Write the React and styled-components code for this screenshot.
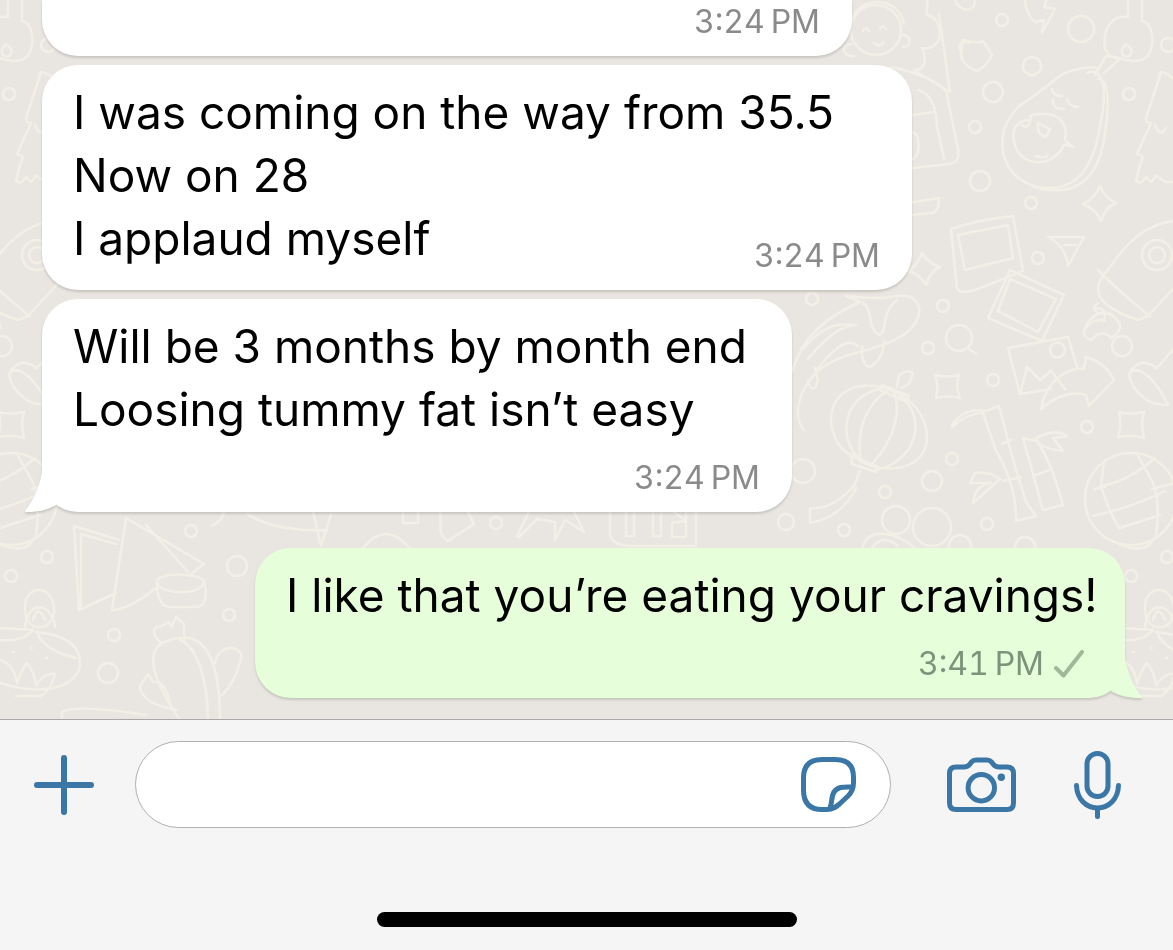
import React, { useState } from "react";
import styled, { createGlobalStyle } from "styled-components";

const DOTS = [
  [1002, 20, 6], [1081, 29, 13], [1032, 66, 9], [993, 92, 10], [1129, 94, 6],
  [975, 127, 6], [980, 181, 10], [1031, 203, 6], [1038, 258, 6], [812, 299, 6],
  [943, 306, 6], [928, 348, 6], [993, 380, 6], [1122, 346, 10], [1087, 427, 6],
  [952, 459, 6], [932, 481, 10], [885, 492, 6], [896, 520, 14], [932, 527, 19],
  [987, 524, 6], [844, 530, 6], [786, 522, 8], [1025, 547, 10], [960, 546, 11],
  [191, 531, 6], [47, 557, 6], [11, 576, 6], [237, 566, 10], [229, 615, 6],
  [114, 635, 6], [108, 673, 10], [496, 523, 6], [1168, 45, 7],
  [803, 471, 12],
];

const DOODLES = [
  // baby face and fox
  "M851 30a25 25 0 1 0 50 0a25 25 0 1 0-50 0M852 22c3-25 46-29 52 2M863 31q3-5 6 0M880 29q3-5 6 0M874 43q6 5 10-1M851 44c-10 1-10 12 3 12M902 35c10-1 10 12 1 12",
  "M927 0c2 8-4 14 3 16c9 3 12 17 8 25c-4 7-13 8-16 7c3 6 7 22-8 22l36 22l-11-78M892 67c22 5 42 12 54 24l12 58c2 10-2 14-9 15l-36 4M918 90c14 4 18 18 19 36l7 33M913 115l20-3M913 132c8 3 7 24 0 27",
  // bag and bolt
  "M963 40q12 4 20 1l9 14q-4 10-15 16q-14-5-16-15zM968 43c-10-6-10 8-6 9M955 0c4 12 20 14 20 0",
  "M1025 0c1 10 4 18 10 22l9-2l-2 13l13-24l-11-2l3-8",
  // avocado
  "M1095 75c12-13-20-7-34 0c-13 10-25 20-36 27c-32 20-31 72 9 84c50 12 62-33 66-61c10-44-1-58-13-52M1034 187c66 18 70-43 73-70c2-22 0-38-9-38M1096 73l10-17l15 2l-17 15M1052 89q1 7 10 7M1067 99q2 8 11 8M1053 100q-1 9 11 9M1022 125q8 6 9-10c32-6 35 12 35 20q-4 6 8 12q-12-4-11 0c-14 24-46 18-49-6q-4-18 14-21M1036 156q9 3 12-1M1038 123l12 6l-4 8q-10-3-8-14",
  "M1128 0v17c-20-3-25 17-23 31c4 12 16 10 21 12c14 3 24 0 26-16c2-14-4-22-10-23V0M1122 50a5 5 0 1 0 9-1q-5-9-9 1",
  // pine tree
  "M1161 72l-14 43q-3 8 4 8l-14 31q8 2 5 5l-6 21q4 6 10-3l5 5l5-6l10 6h14M1161 72q8 1 13 8M1155 125q5 13 11 3",
  // photo frames
  "M951 229q30-10 62-13l10 55l-48 19q-15 5-18-2zM958 235l50-10l5 33l-48 12zM1010 270l54 25l-22 46l-54-23zM1010 279l46 20l-18 33l-40-21z",
  "M1048 237h36l-16 29q-2-20-20-29M1064 245h12",
  // sparkles
  "M1100 186q5 12 16 17q-11 5-15 18q-5-12-18-17q12-6 17-18M922 253q6 10 18 14q-10 4-14 18q-5-10-18-14q10-6 14-18M935 375q12 3 24 0q-4 12 1 23q-12-3-24 0q3-12-1-23M1119 412q12 3 25 0q-4 12 0 26q-12-4-26-1q4-12 1-25M913 202l26-4q0 15-8 15l-20 2",
  // shark
  "M1200 220c-50-4-72 20-92 50q-30 30 30 50l10-4l52-56M1098 270q28 28 52 46M1142 255a15 15 0 1 0 30 0a15 15 0 1 0-30 0M1149 255a8 8 0 1 0 16 0a8 8 0 1 0-16 0",
  "M1115 318c-10-12-24-1-28 6q-8 12 4 16q12-12 20-2q16-10 4-20M1094 308q16 0 9 13M1098 303q-9 7 3 11M1085 329q9-12 20-8",
  // koi
  "M792 372c10-35 32-54 68-70l-14-6q35 4 51 0c16-3 24 8 22 18c-5 22-35 32-60 38q-32 8-46 24c-16 20-20 42-9 54M804 348c20-25 38-25 52-23q-20 0-48 34M863 303c10 5 4 26 16 32c9-2 1-22 18-35M862 346c-1 16 5 24 10 20q12-10 12-24M816 370c20-24 32-33 42-24M808 381q5 16 10 0l-3-13",
  // magnifier
  "M946 338a13 13 0 1 0 26 0a13 13 0 1 0-26 0M968 348l8 6",
  // picture and arrow
  "M1008 348l60-11l9 30M1008 348l12 46l31-5M1021 391l6-24l13 13l11-9l14 18M1050 350a7 7 0 1 0 15 0a7 7 0 1 0-15 0M1041 409c5-30 30-43 43-40l2-12q20 6 28 23l-25 26l-3-11q-22-6-45 14",
  // pen
  "M1130 372c12-8 28 12 38 33c-26 2-42-25-38-33q10-16 27-4l26-30",
  // lantern
  "M831 424c-3-60 92-45 96 12c1 42-60 37-71 20q-19-3-25-32M883 388c-48 9-43 62-18 74M888 390c-24 15-32 44-27 72M893 390c12 26-6 58-21 74M899 395c30 22 17 67-23 75M882 385l27 11l-2 6l-27-12zM897 387l2-12q8-6 14-2l-4 11l-8 4M851 456l25 10v6l-24-8zM860 471l-6 15q-22 24-44 22v15q32-6 46-35",
  // bamboo
  "M952 425q12-18 34-14l13-5l13 50l14 46l10 14l-20 5q0-38-20-70l-13-38q-15 0-31 14M1002 444l9-4M1003 481l18-4M1023 438l20 72l20-5q-12-44-26-64zM1036 475l13-5M1036 438q20-10 31-2l-14 2l10 13q-25-3-27-13M970 483l5-10q15-2 25 6l-27 24q2-18 18-20z",
  // ball
  "M1085 499a46 46 0 1 0 92 0a46 46 0 1 0-92 0M1093 516q40-9 72-25M1101 486q28-5 54-28M1104 461l-3 25q8 26 18 42M1136 452l16 29q9 20 4 54M1120 528l40-13M1105 487l-11 2M1152 489l22-6",
  // book and bowl
  "M74 526l45 14M81 534l35 10M74 526l5 84l37-17M81 534v75M126 518l-14 92q16 0 44-22M126 518l78 46l-14 11M146 525l42 47M157 582c-2-10 44-10 47 0c4 14 1 25-8 25h-28c-9-2-11-15-11-25M157 582q3 10 24 10q22 0 23-11",
  // candle bowl
  "M25 608c0-24 27-24 29 0c1 12-7 20-15 19c-9 0-14-7-14-19M33 620q5-17 12 0M0 628l33 2q-10 12-33 10M36 632q50 5 43 38c-10 20-40 25-79 13M37 632q6 18 39 26M0 660q14 4 17 23q4-12 10-20q8 10 9 23q8-14 19-12q-4 16-14 22h-25M31 648h1M13 652h1M46 658h1",
  // cactus
  "M180 720q-48-70-10-80c30-10 50 10 50 80M208 720c0-40-12-75-28-80M162 643c-8-4-12-18-2-16l8-5l4 4l4-9l8 7v18M215 663c4-22 30-16 26-4q-6 24-19 36M177 710q-36-6-37-24l8-12l5 8q12-1 17 20",
  "M62 720v-8q14-8 84 3M212 526q10-5 12-14M247 514q30 18 80 16M313 512l8 34l10-32",
  // between the bubbles
  "M362 549q24-30 48 0M440 513c2 12-4 20 8 28l26-17l-6-12M517 536l12-24M519 537l18-18l18 3v18l10-20l19 12l-10-20M610 512v23q4 12 24 11h62V512M626 512v24h8v-22M653 512v24h8v-22M674 512l12 9l-14 2v14h14v-24M403 512v11h15v-11",
  "M862 549c6-24 36-16 54 0M872 548q10-15 26-2M1120 545q28 9 33-6",
  // lotus
  "M1145 627c4-30 28-22 30 0",
];

export default function App() {
  const [draft, setDraft] = useState("");

  return (
    <>
      <GlobalStyle />
      <Page>
        <Chat>
          <Wallpaper />
          <Bubble $width={810} $cut>
            <Meta dateTime="15:24">3:24&#8239;PM</Meta>
          </Bubble>
          <Bubble $width={870}>
            <Message>
              I was coming on the way from 35.5
              <br />
              Now on 28
              <br />
              I applaud myself
            </Message>
            <Meta $inline dateTime="15:24">3:24&#8239;PM</Meta>
          </Bubble>
          <Bubble $width={750}>
            <Message>
              Will be 3 months by month end
              <br />
              Loosing tummy fat isn’t easy
            </Message>
            <Meta dateTime="15:24">3:24&#8239;PM</Meta>
            <Tail />
          </Bubble>
          <Bubble $width={870} $sent>
            <Message>I like that you’re eating your cravings!</Message>
            <Meta $sent dateTime="15:41">
              3:41&#8239;PM
              <Check />
            </Meta>
            <Tail $sent />
          </Bubble>
        </Chat>

        <Footer>
          <Composer>
            <IconButton type="button" aria-label="Attach">
              <svg width="60" height="60" viewBox="0 0 60 60">
                <path d="M30 3v54M3 30h54" strokeWidth="6" />
              </svg>
            </IconButton>
            <Field>
              <TextInput
                type="text"
                aria-label="Message"
                value={draft}
                onChange={(e) => setDraft(e.target.value)}
              />
              <IconButton type="button" aria-label="Stickers">
                <svg width="55" height="55" viewBox="0 0 55 55">
                  <path d="M52.5 20C52.5 8 46 2.5 34 2.5H21C8.5 2.5 2.5 8.5 2.5 21V33C2.5 46 8.5 52.5 21 52.5H26C32 52.5 35 50 38.5 47L47 39C51 35 52.5 32 52.5 26Z" />
                  <path d="M51.5 30C41 29.6 36.5 30 33 35C30 39.5 31.5 45 29 51" />
                </svg>
              </IconButton>
            </Field>
            <IconButton type="button" aria-label="Camera">
              <svg width="69" height="56" viewBox="0 0 69 56">
                <path d="M9 10H17C20 10 21.5 9 23 7L24.5 5C26 3.3 27 3 29 3H40C42 3 43 3.3 44.5 5L46 7C47.5 9 49 10 52 10H60Q66.5 10 66.5 16.5V46Q66.5 52.5 60 52.5H9Q2.5 52.5 2.5 46V16.5Q2.5 10 9 10Z" />
                <circle cx="34.3" cy="30.7" r="13.2" />
                <circle cx="54.3" cy="20.3" r="3.7" fill="#3a76a6" stroke="none" />
              </svg>
            </IconButton>
            <IconButton type="button" aria-label="Record voice message">
              <svg width="47" height="68" viewBox="0 0 47 68">
                <rect x="13" y="2.5" width="21" height="43" rx="10.5" />
                <path d="M2.5 34.5C3 48 12 57 23.5 57S44 48 44.5 34.5M23.5 57V65.5" />
              </svg>
            </IconButton>
          </Composer>
          <HomeBar />
        </Footer>
      </Page>
    </>
  );
}

function Wallpaper() {
  return (
    <WallpaperSvg aria-hidden="true">
      <defs>
        <g id="doodles">
          {DOTS.map(([x, y, r]) => (
            <circle key={`${x}-${y}`} cx={x} cy={y} r={r} />
          ))}
          {DOODLES.map((d) => (
            <path key={d} d={d} />
          ))}
        </g>
      </defs>
      <use href="#doodles" />
      <use href="#doodles" x="-1120" />
      <use href="#doodles" x="1120" />
    </WallpaperSvg>
  );
}

function Tail({ $sent }) {
  return (
    <TailSvg $sent={$sent} width="32" height="40" viewBox="0 0 32 40" aria-hidden="true">
      <path d="M17 0C14 17 8 29 0 39Q-1 40 2 40C13 40 22 38 31 33L32 0Z" />
    </TailSvg>
  );
}

function Check() {
  return (
    <CheckSvg width="30" height="28" viewBox="0 0 30 28" role="img" aria-label="Sent">
      <path d="M2 18L9.5 25.5L28 2" />
    </CheckSvg>
  );
}

const GlobalStyle = createGlobalStyle`
  * {
    box-sizing: border-box;
  }

  body {
    margin: 0;
    background-color: #f5f5f5;
    font-family: Inter, "Liberation Sans", sans-serif;
  }
`;

const Page = styled.main`
  display: flex;
  flex-direction: column;
  min-height: 100vh;
`;

const Chat = styled.section`
  position: relative;
  flex: 1;
  display: flex;
  flex-direction: column;
  align-items: flex-start;
  gap: 9px;
  padding: 0 48px 21px 42px;
  overflow: hidden;
  background-color: #e9e6e1;
`;

const WallpaperSvg = styled.svg`
  position: absolute;
  top: 0;
  left: 0;
  width: 100%;
  height: 100%;
  fill: none;
  stroke: #f2efe6;
  stroke-width: 2.5;
  stroke-linejoin: round;
  stroke-linecap: round;
`;

const Bubble = styled.article`
  position: relative;
  display: grid;
  width: ${(p) => p.$width}px;
  max-width: 100%;
  padding: ${(p) => (p.$cut ? "0" : "16px")} 20px 16px 31px;
  border-radius: ${(p) => (p.$cut ? "0 0 36px 36px" : "36px")};
  background-color: ${(p) => (p.$sent ? "#e6ffda" : "#ffffff")};
  filter: drop-shadow(0 2px 1px rgba(0, 0, 0, 0.14));

  ${(p) =>
    p.$sent &&
    `
    align-self: flex-end;
    margin-top: 27px;
  `}
`;

const Message = styled.p`
  grid-area: 1 / 1;
  margin: 0;
  padding-bottom: 4px;
  font-size: 46px;
  line-height: 63px;
  color: #000000;
`;

const Meta = styled.time`
  grid-area: ${(p) => (p.$inline ? "1 / 1" : "auto / 1")};
  align-self: end;
  justify-self: end;
  display: flex;
  align-items: center;
  gap: 10px;
  padding-right: ${(p) => (p.$sent ? "21px" : "12px")};
  font-size: 32px;
  line-height: 36px;
  font-variant-numeric: tabular-nums;
  color: ${(p) => (p.$sent ? "#7f927a" : "#8a8a8a")};

  ${Message} + & {
    padding-top: 15px;
  }

  &:first-child {
    padding-top: 4px;
  }
`;

const CheckSvg = styled.svg`
  fill: none;
  stroke: #a0b798;
  stroke-width: 4;
  stroke-linecap: round;
  stroke-linejoin: round;
`;

const TailSvg = styled.svg`
  position: absolute;
  bottom: 0;
  left: ${(p) => (p.$sent ? "auto" : "-17px")};
  right: ${(p) => (p.$sent ? "-17px" : "auto")};
  transform: ${(p) => (p.$sent ? "scaleX(-1)" : "none")};
  fill: ${(p) => (p.$sent ? "#e6ffda" : "#ffffff")};
`;

const Footer = styled.footer`
  display: flex;
  flex-direction: column;
  align-items: center;
  border-top: 1px solid #a9a9a9;
  padding-bottom: 23px;
  background-color: #f5f5f5;
`;

const Composer = styled.form`
  display: flex;
  align-items: center;
  width: 100%;
  padding: 21px 52px 84px 34px;

  & > :nth-child(2) {
    margin-left: 41px;
    margin-right: 56px;
  }

  & > :last-child {
    margin-left: 58px;
  }
`;

const Field = styled.div`
  flex: 1;
  display: flex;
  align-items: center;
  min-width: 0;
  height: 87px;
  padding: 0 34px 0 40px;
  border: 1px solid #b0b0b0;
  border-radius: 44px;
  background-color: #ffffff;
`;

const TextInput = styled.input`
  flex: 1;
  min-width: 0;
  height: 64px;
  padding: 0;
  border: none;
  outline: none;
  background: transparent;
  font-family: inherit;
  font-size: 46px;
`;

const IconButton = styled.button`
  flex: none;
  display: flex;
  padding: 0;
  border: none;
  background: none;
  cursor: pointer;

  svg {
    fill: none;
    stroke: #3a76a6;
    stroke-width: 5;
    stroke-linecap: round;
    stroke-linejoin: round;
  }
`;

const HomeBar = styled.div`
  width: 420px;
  max-width: 80%;
  height: 15px;
  border-radius: 8px;
  background-color: #000000;
`;
